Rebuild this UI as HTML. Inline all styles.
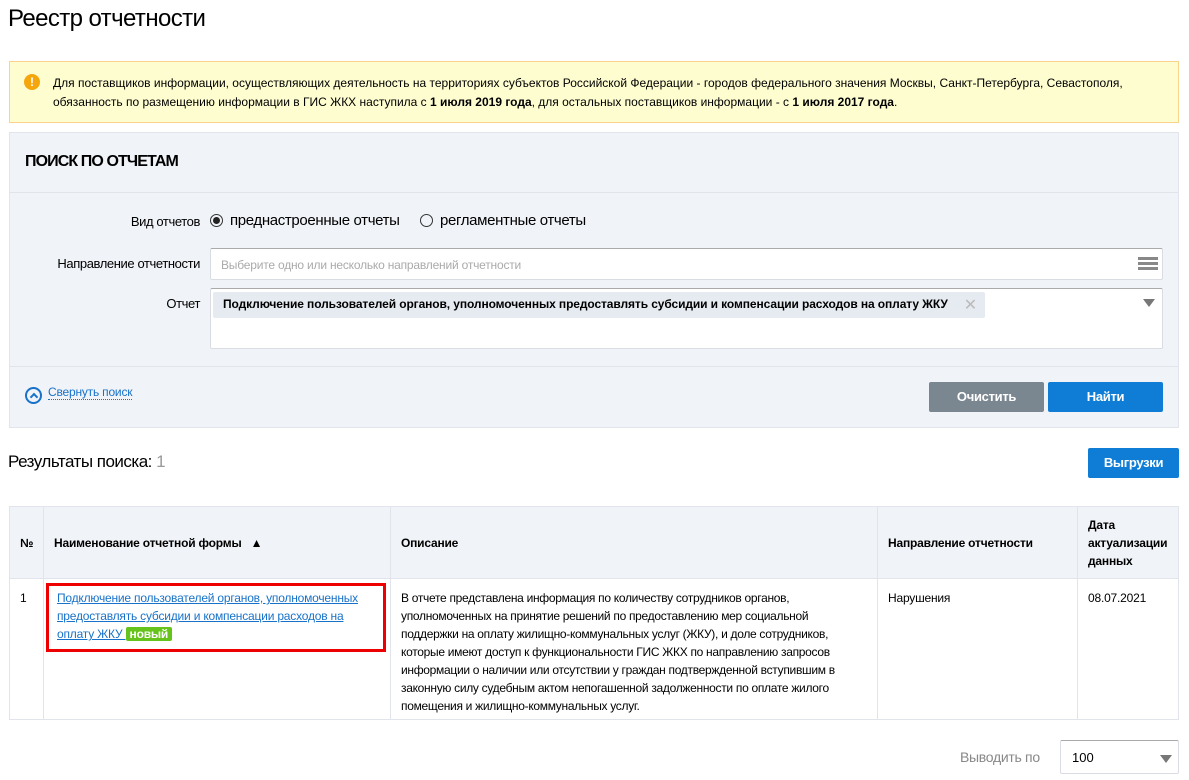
<!DOCTYPE html>
<html><head><meta charset="utf-8"><style>
*{box-sizing:border-box;margin:0;padding:0}
body{width:1189px;height:780px;background:#fff;font-family:"Liberation Sans",sans-serif;color:#000;position:relative;overflow:hidden;font-size:13px}
.abs{position:absolute}
.nw{white-space:nowrap}
h1{position:absolute;left:8px;top:5px;font-size:24px;font-weight:normal;letter-spacing:-0.6px}
.note{left:9px;top:61px;width:1170px;height:62px;background:#fefdd0;border:1px solid #fbd38a;padding:12px 0 0 43px;line-height:19px;font-size:12px;letter-spacing:0px;white-space:nowrap}
.ic{left:24px;top:74px;width:16px;height:16px;border-radius:50%;background:#f5a60c;color:#fff;font-weight:bold;font-size:12px;text-align:center;line-height:16px}
.panel{left:9px;top:132px;width:1170px;height:296px;background:#f0f3f8;border:1px solid #e1e5eb}
.ph{left:0;top:0;width:1168px;height:60px;border-bottom:1px solid #e1e5eb;font-weight:bold;font-size:16px;padding:20px 0 0 15px;letter-spacing:-0.9px}
.lbl{text-align:right;width:190px;font-size:13px;letter-spacing:-0.4px}
.inp{background:#fff;border:1px solid #d9dde3;border-top-color:#aaa;border-radius:2px}
.btn{color:#fff;font-size:13px;text-align:center;line-height:30px;border-radius:2px;font-weight:bold;letter-spacing:-0.3px}
table{position:absolute;left:9px;top:506px;width:1170px;border-collapse:collapse;table-layout:fixed}
td,th{border:1px solid #e1e5eb;vertical-align:top;font-size:12px;text-align:left;padding:0 10px;letter-spacing:-0.2px;white-space:nowrap}
th{background:#f0f3f8;height:72px;vertical-align:middle;font-weight:bold;line-height:18px}
a{color:#1872c9}
</style></head><body>
<h1>Реестр отчетности</h1>
<div class="abs note">Для поставщиков информации, осуществляющих деятельность на территориях субъектов Российской Федерации - городов федерального значения Москвы, Санкт-Петербурга, Севастополя,<br>обязанность по размещению информации в ГИС ЖКХ наступила с <b>1 июля 2019 года</b>, для остальных поставщиков информации - с <b>1 июля 2017 года</b>.</div>
<div class="abs ic">!</div>
<div class="abs panel">
<div class="abs ph">ПОИСК ПО ОТЧЕТАМ</div>
<div class="abs lbl" style="left:0;top:81px">Вид отчетов</div>
<div class="abs" style="left:200px;top:81px;width:13px;height:13px;border:1px solid #333;border-radius:50%"><div style="margin:2px;width:7px;height:7px;background:#222;border-radius:50%"></div></div>
<div class="abs nw" style="left:220px;top:79px;font-size:15px;letter-spacing:-0.35px">преднастроенные отчеты</div>
<div class="abs" style="left:410px;top:81px;width:13px;height:13px;border:1px solid #333;border-radius:50%"></div>
<div class="abs nw" style="left:430px;top:79px;font-size:15px;letter-spacing:-0.35px">регламентные отчеты</div>
<div class="abs lbl" style="left:0;top:123px">Направление отчетности</div>
<div class="abs inp nw" style="left:200px;top:115px;width:953px;height:32px;color:#aaa;padding:9px 10px;font-size:12px;letter-spacing:-0.2px">Выберите одно или несколько направлений отчетности
<div class="abs" style="right:4px;top:8px;width:20px;height:3px;background:#888;box-shadow:0 5px 0 #888,0 10px 0 #888"></div></div>
<div class="abs lbl" style="left:0;top:163px">Отчет</div>
<div class="abs inp" style="left:200px;top:155px;width:953px;height:61px">
<div class="abs nw" style="left:2px;top:3px;width:772px;height:26px;background:#e6ebf1;border-radius:2px;font-weight:bold;padding:5px 10px;font-size:12px;letter-spacing:-0.1px">Подключение пользователей органов, уполномоченных предоставлять субсидии и компенсации расходов на оплату ЖКУ<span style="position:absolute;right:8px;top:3px;color:#bbb;font-weight:normal;font-size:16px">✕</span></div>
<div class="abs" style="right:7px;top:10px;width:0;height:0;border-left:6px solid transparent;border-right:6px solid transparent;border-top:8px solid #777"></div></div>
<div class="abs" style="left:0;top:233px;width:1168px;border-top:1px solid #e1e5eb"></div>
<div class="abs" style="left:15px;top:254px;width:17px;height:17px;border:2.5px solid #1872c9;border-radius:50%"></div>
<div class="abs" style="left:21px;top:261px;width:6px;height:6px;border-left:2.5px solid #1872c9;border-top:2.5px solid #1872c9;transform:rotate(45deg)"></div>
<div class="abs nw" style="left:38px;top:252px;color:#1872c9;border-bottom:1px dotted #1872c9;font-size:12px;letter-spacing:-0.2px">Свернуть поиск</div>
<div class="abs btn" style="left:919px;top:249px;width:115px;background:#7a8690">Очистить</div>
<div class="abs btn" style="left:1038px;top:249px;width:115px;background:#0f7dd5">Найти</div>
</div>
<div class="abs nw" style="left:8px;top:452px;font-size:17px;letter-spacing:-0.5px">Результаты поиска: <span style="color:#999">1</span></div>
<div class="abs btn" style="left:1088px;top:448px;width:91px;background:#0f7dd5">Выгрузки</div>
<table>
<colgroup><col style="width:34px"><col style="width:347px"><col style="width:487px"><col style="width:200px"><col></colgroup>
<tr><th>№</th><th>Наименование отчетной формы <span style="font-size:12px;margin-left:6px">▲</span></th><th>Описание</th><th>Направление отчетности</th><th style="white-space:normal">Дата актуализации данных</th></tr>
<tr style="height:141px"><td style="padding-top:12px">1</td>
<td style="padding:4px 4px 0 2px"><div style="border:3px solid #e00;padding:3px 8px 6px 8px;line-height:18px;letter-spacing:-0.2px"><a href="#">Подключение пользователей органов, уполномоченных<br>предоставлять субсидии и компенсации расходов на<br>оплату ЖКУ </a><span style="background:#66c31c;color:#fff;font-weight:bold;padding:0 4px;border-radius:2px">новый</span></div></td>
<td style="padding-top:10px;line-height:18px;letter-spacing:-0.3px">В отчете представлена информация по количеству сотрудников органов,<br>уполномоченных на принятие решений по предоставлению мер социальной<br>поддержки на оплату жилищно-коммунальных услуг (ЖКУ), и доле сотрудников,<br>которые имеют доступ к функциональности ГИС ЖКХ по направлению запросов<br>информации о наличии или отсутствии у граждан подтвержденной вступившим в<br>законную силу судебным актом непогашенной задолженности по оплате жилого<br>помещения и жилищно-коммунальных услуг.</td>
<td style="padding-top:12px">Нарушения</td><td style="padding-top:12px">08.07.2021</td></tr>
</table>
<div class="abs nw" style="left:960px;top:749px;color:#888;font-size:14px;letter-spacing:-0.3px">Выводить по</div>
<div class="abs inp" style="left:1060px;top:740px;width:119px;height:34px;padding:9px 11px;font-size:13px">100<div class="abs" style="right:6px;top:14px;border-left:6px solid transparent;border-right:6px solid transparent;border-top:8px solid #777"></div></div>
</body></html>
